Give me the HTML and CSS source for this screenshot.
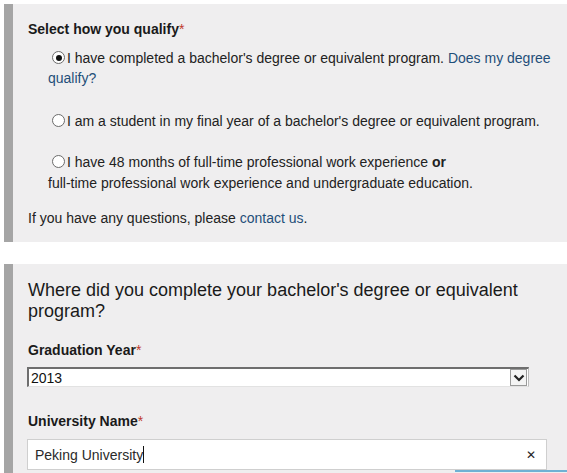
FILE: index.html
```html
<!DOCTYPE html>
<html lang="en">
<head>
<meta charset="utf-8">
<title>Qualification</title>
<link rel="stylesheet" href="styles.css">
</head>
<body>
<div class="page">
  <section class="panel panel-qualify">
    <div class="label">Select how you qualify<span class="req">*</span></div>
    <div class="option opt1"><span class="radio checked"></span>I have completed a bachelor's degree or equivalent program. <a class="link">Does my degree qualify?</a></div>
    <div class="option opt2"><span class="radio"></span>I am a student in my final year of a bachelor's degree or equivalent program.</div>
    <div class="option opt3"><span class="radio"></span>I have 48 months of full-time professional work experience <b>or</b><br>full-time professional work experience and undergraduate education.</div>
    <div class="footer">If you have any questions, please <a class="link">contact us</a>.</div>
  </section>
  <section class="panel panel-school">
    <h2 class="heading">Where did you complete your bachelor's degree or equivalent program?</h2>
    <div class="label label-year">Graduation Year<span class="req">*</span></div>
    <div class="select">
      <span class="select-value">2013</span>
      <span class="select-btn"><svg width="12" height="8" viewBox="0 0 12 8"><path d="M1.5 1.5 L6 6 L10.5 1.5" fill="none" stroke="#222" stroke-width="2.2"/></svg></span>
    </div>
    <div class="label label-uni">University Name<span class="req">*</span></div>
    <div class="input">
      <span class="input-value">Peking University</span><span class="caret"></span>
      <span class="clear">&#x2715;</span>
    </div>
    <div class="focus-line"></div>
  </section>
</div>
</body>
</html>
```
FILE: styles.css
```css
html, body {
  margin: 0;
  padding: 0;
  background: #ffffff;
}
body {
  font-family: "Liberation Sans", Arial, sans-serif;
  font-size: 14px;
  color: #222;
}
.page {
  padding: 4px 0 0 4px;
  display: flex;
  flex-direction: column;
  gap: 22px;
}
.panel {
  background: #efeeef;
  border-left: 9px solid #a5a5a5;
  padding-left: 15px;
  line-height: 20px;
}
.panel-qualify {
  padding-top: 15px;
  padding-bottom: 14px;
}
.label {
  font-weight: bold;
  color: #1a1a1a;
}
.req {
  color: #c0392b;
  font-weight: normal;
}
.option {
  margin-left: 20px;
  text-indent: 4px;
}
.opt1 { margin-top: 9px; }
.opt2 { margin-top: 23px; }
.opt3 { margin-top: 21px; line-height: 21px; }
.footer { margin-top: 14px; }
.link {
  color: #1f4e79;
  text-decoration: none;
}
.radio {
  display: inline-block;
  width: 11px;
  height: 11px;
  border: 1px solid #6b6b6b;
  border-radius: 50%;
  background: #fff;
  vertical-align: -1px;
  margin-right: 2px;
  position: relative;
  text-indent: 0;
}
.radio.checked::after {
  content: "";
  position: absolute;
  left: 2.5px;
  top: 2.5px;
  width: 6px;
  height: 6px;
  border-radius: 50%;
  background: #111;
}
.panel-school {
  padding-top: 16px;
  padding-bottom: 3px;
  position: relative;
}
.heading {
  margin: 0;
  font-size: 18px;
  font-weight: normal;
  line-height: 21px;
  color: #1a1a1a;
  padding-right: 40px;
}
.label-year { margin-top: 18px; }
.select {
  margin-top: 7px;
  width: 502px;
  height: 20px;
  box-sizing: border-box;
  background: #fff;
  border-top: 2px solid #6e6e6e;
  border-left: 2px solid #6e6e6e;
  border-right: 1px solid #bdbdbd;
  border-bottom: 1px solid #e2e2e2;
  display: flex;
  align-items: center;
  justify-content: space-between;
  margin-left: -1px;
}
.select-value {
  padding-left: 2px;
  line-height: 16px;
  color: #111;
}
.select-btn {
  width: 17px;
  height: 17px;
  box-sizing: border-box;
  border: 1px solid #9a9a9a;
  background: #f4f4f4;
  display: flex;
  align-items: center;
  justify-content: center;
  margin-right: 1px;
}
.label-uni { margin-top: 24px; }
.input {
  margin-top: 8px;
  width: 520px;
  height: 31px;
  box-sizing: border-box;
  background: #fff;
  border: 1px solid #cfcfcf;
  display: flex;
  align-items: center;
  padding-left: 7px;
  padding-right: 10px;
  margin-left: -1px;
  font-size: 14px;
  color: #2a2a2a;
}
.caret {
  display: inline-block;
  width: 1px;
  height: 17px;
  background: #111;
}
.clear {
  margin-left: auto;
  font-size: 12px;
  color: #222;
}
.focus-line {
  height: 2px;
  margin-left: 427px;
  background: #6fb1d4;
}
```
